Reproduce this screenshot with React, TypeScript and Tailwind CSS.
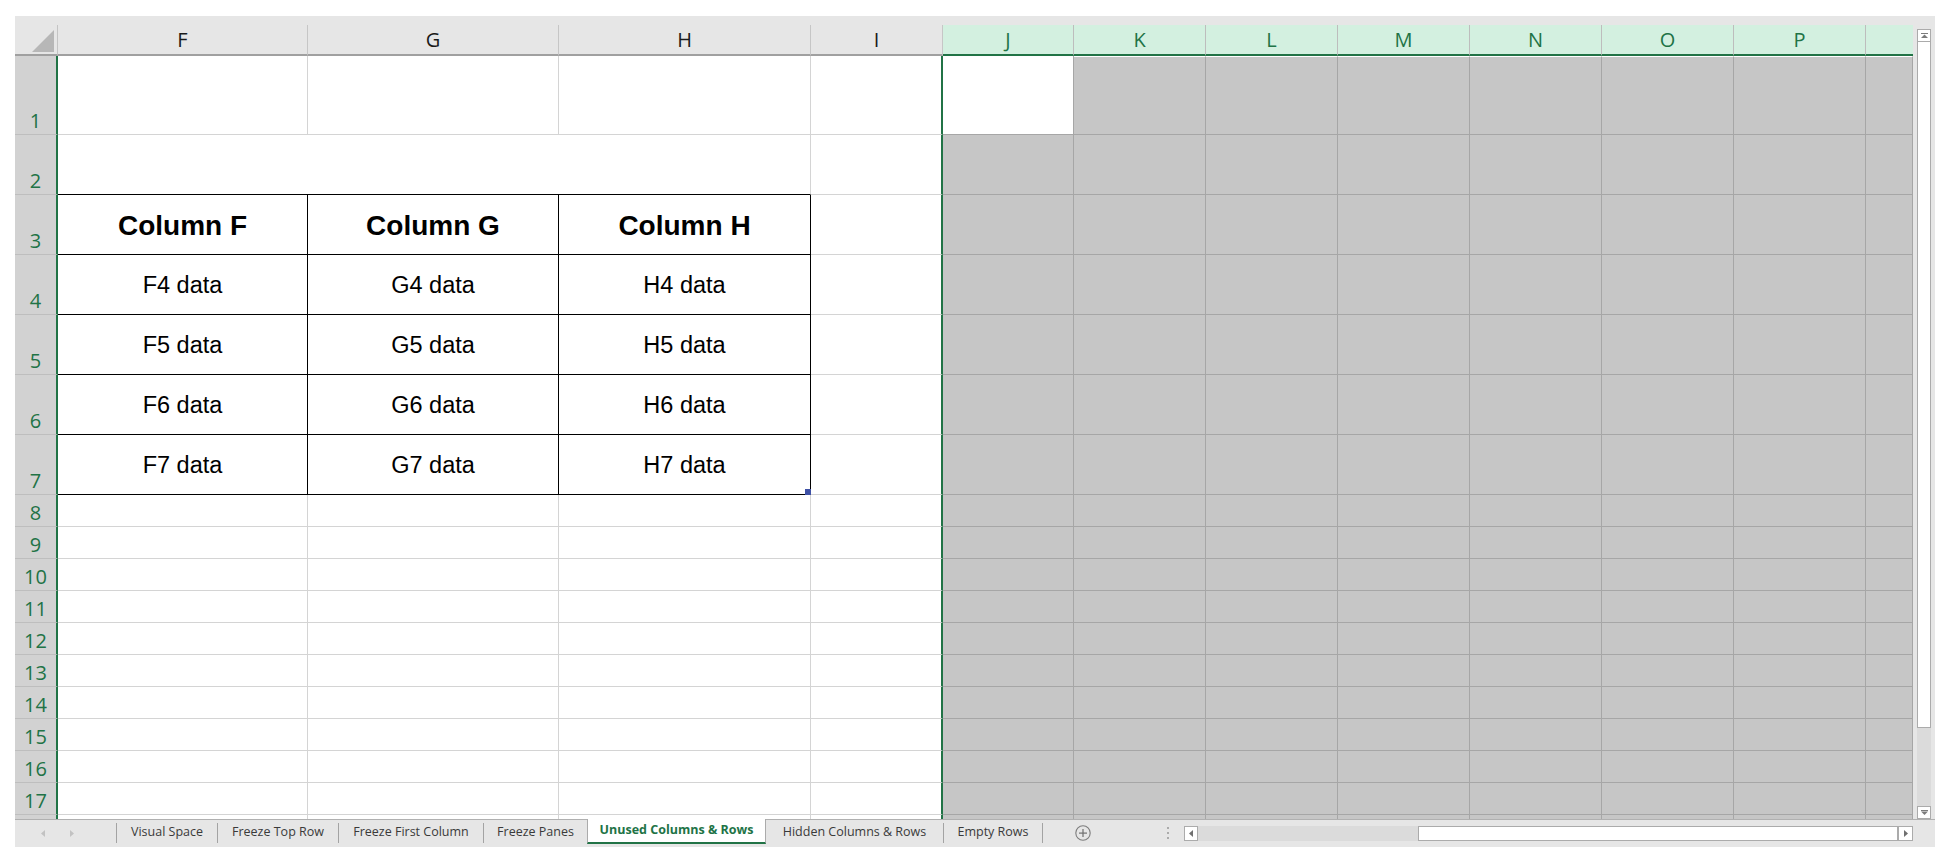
import React from "react";

const LEFT = ["F", "G", "H", "I"];
const RIGHT = ["J", "K", "L", "M", "N", "O", "P", ""];
const ROWS = Array.from({ length: 18 }, (_, i) => i + 1);

function Tri({ dir, color }: { dir: "left" | "right" | "up" | "down"; color: string }) {
  if (dir === "left")
    return (
      <svg width="4" height="7" viewBox="0 0 4 7">
        <polygon points="4,0 4,7 0,3.5" fill={color} />
      </svg>
    );
  if (dir === "right")
    return (
      <svg width="4" height="7" viewBox="0 0 4 7">
        <polygon points="0,0 0,7 4,3.5" fill={color} />
      </svg>
    );
  if (dir === "up")
    return (
      <svg width="7" height="5" viewBox="0 0 7 5">
        <rect x="0" y="0" width="7" height="1" fill={color} />
        <polygon points="0,5 7,5 3.5,1.5" fill={color} />
      </svg>
    );
  return (
    <svg width="7" height="5" viewBox="0 0 7 5">
      <rect x="0" y="0" width="7" height="1" fill={color} />
      <polygon points="0,1.5 7,1.5 3.5,5" fill={color} />
    </svg>
  );
}

function rowCells(r: number): React.ReactNode[] {
  const last = r === 18;
  const cells: React.ReactNode[] = [];
  cells.push(
    <div
      key={`rh${r}`}
      className={
        "flex items-end justify-center bg-[#d2d2d2] border-r-2 border-r-[#217346] text-[20px] leading-[20px] text-[#217346] pb-[3px] " +
        (last ? "" : "border-b border-b-[#bebebe]")
      }
    >
      {last ? "" : r}
    </div>
  );

  if (r === 2) {
    cells.push(
      <div key="m2" className="col-span-3 bg-white border-r border-r-[#d4d4d4] border-b border-b-black" />
    );
  } else {
    ["F", "G", "H"].forEach((c) => {
      const table = r >= 3 && r <= 7;
      if (table) {
        cells.push(
          <div
            key={`${c}${r}`}
            className={
              "relative flex items-center justify-center pt-[3px] bg-white border-r border-r-black border-b border-b-black font-['Liberation_Sans',Arial,sans-serif] text-black " +
              (r === 3 ? "text-[28px] font-bold" : "text-[23.5px]")
            }
          >
            {r === 3 ? `Column ${c}` : `${c}${r} data`}
            {c === "H" && r === 7 ? (
              <div className="absolute right-[-1px] bottom-[-1px] w-[6px] h-[6px] bg-[#3f51a5]" />
            ) : null}
          </div>
        );
      } else {
        cells.push(
          <div
            key={`${c}${r}`}
            className={"bg-white border-r border-r-[#d4d4d4] " + (last ? "" : "border-b border-b-[#d4d4d4]")}
          />
        );
      }
    });
  }
  cells.push(
    <div
      key={`I${r}`}
      className={"bg-white border-r-2 border-r-[#217346] " + (last ? "" : "border-b border-b-[#d4d4d4]")}
    />
  );

  RIGHT.forEach((_, i) => {
    const j1 = r === 1 && i === 0;
    cells.push(
      <div
        key={`R${i}-${r}`}
        className={
          (j1 ? "bg-white " : "bg-[#c6c6c6] ") +
          "border-r border-r-[#a6a6a6] " +
          (last ? "" : "border-b border-b-[#a6a6a6] ") +
          (r === 1 && !j1 ? "border-t border-t-white" : "")
        }
      />
    );
  });
  return cells;
}

function Sep() {
  return <div className="self-start mt-[3px] w-px h-[20px] bg-[#a3a3a3]" />;
}

function Tab({ w, children }: { w: string; children: React.ReactNode }) {
  return <div className={"flex items-center justify-center pb-[2px] whitespace-nowrap " + w}>{children}</div>;
}

export default function App() {
  return (
    <div className="w-[1956px] h-[865px] bg-white pt-[16px] pl-[15px] overflow-hidden">
      <div className="w-[1920px] h-[831px] bg-[#e6e6e6] flex flex-col">
        <div className="h-[9px]" />
        <div className="flex h-[794px]">
          <div className="w-[1898px] h-[794px] overflow-hidden grid grid-cols-[43px_250px_251px_252px_132px_131px_repeat(6,132px)_47px] grid-rows-[31px_79px_repeat(6,60px)_repeat(10,32px)_4px] font-['Open_Sans',sans-serif]">
            <div className="flex items-end justify-end pr-[3px] pb-[2px] bg-[#e6e6e6] border-r border-r-[#c4c4c4] border-b-2 border-b-[#a0a0a0]">
              <svg width="22" height="22" viewBox="0 0 22 22">
                <polygon points="22,0 22,22 0,22" fill="#b7b7b7" />
              </svg>
            </div>
            {LEFT.map((c) => (
              <div
                key={`h${c}`}
                className="flex items-center justify-center pt-[1px] bg-[#e6e6e6] border-r border-r-[#c6c6c6] border-b-2 border-b-[#a0a0a0] text-[20px] text-[#1a1a1a]"
              >
                {c}
              </div>
            ))}
            {RIGHT.map((c, i) => (
              <div
                key={`h${i}`}
                className={
                  "flex items-center justify-center pt-[1px] bg-[#d3f0e0] border-b-2 border-b-[#217346] text-[20px] text-[#217346] " +
                  (i < 7 ? "border-r border-r-[#bdbdbd]" : "")
                }
              >
                {c}
              </div>
            ))}
            {ROWS.map((r) => rowCells(r))}
          </div>
          <div className="w-[22px] flex flex-col pl-[4px] pt-[4px]">
            <div className="w-[14px] h-[13px] bg-white border border-[#ababab] flex items-center justify-center">
              <Tri dir="up" color="#7b7b7b" />
            </div>
            <div className="w-[14px] h-[686px] bg-white border-x border-b border-[#ababab]" />
            <div className="w-[14px] h-[78px] bg-[#dbdbdb]" />
            <div className="w-[14px] h-[13px] bg-white border border-[#ababab] flex items-center justify-center">
              <Tri dir="down" color="#7b7b7b" />
            </div>
          </div>
        </div>
        <div className="flex h-[28px] border-t border-t-[#b0b0b0] font-['Open_Sans',sans-serif] text-[12.5px] text-[#3a3a3a]">
          <div className="w-[101px] flex items-center pb-[1px]">
            <div className="ml-[26px] flex">
              <Tri dir="left" color="#c2c2c2" />
            </div>
            <div className="ml-[25px] flex">
              <Tri dir="right" color="#c2c2c2" />
            </div>
          </div>
          <Sep />
          <Tab w="w-[100px]">Visual Space</Tab>
          <Sep />
          <Tab w="w-[120px]">Freeze Top Row</Tab>
          <Sep />
          <Tab w="w-[144px]">Freeze First Column</Tab>
          <Sep />
          <Tab w="w-[103px]">Freeze Panes</Tab>
          <div className="self-start -mt-px h-[25px] w-[179px] bg-white border-x border-x-[#ababab] border-b-2 border-b-[#217346] flex items-center justify-center font-bold text-[#217346] whitespace-nowrap">
            Unused Columns &amp; Rows
          </div>
          <Tab w="w-[177px]">Hidden Columns &amp; Rows</Tab>
          <Sep />
          <Tab w="w-[98px]">Empty Rows</Tab>
          <Sep />
          <div className="w-[141px] flex items-center pb-[1px]">
            <svg className="ml-[32px]" width="16" height="16" viewBox="0 0 16 16">
              <circle cx="8" cy="8" r="7.2" fill="none" stroke="#7d7d7d" strokeWidth="1.1" />
              <rect x="4" y="7.5" width="8" height="1.2" fill="#6f6f6f" />
              <rect x="7.4" y="4" width="1.2" height="8" fill="#6f6f6f" />
            </svg>
            <div className="ml-[76px] flex flex-col gap-[3px]">
              <div className="w-[2px] h-[2px] bg-[#ababab]" />
              <div className="w-[2px] h-[2px] bg-[#ababab]" />
              <div className="w-[2px] h-[2px] bg-[#ababab]" />
            </div>
          </div>
          <div className="w-[729px] flex items-start pt-[6px]">
            <div className="w-[14px] h-[15px] bg-white border border-[#ababab] flex items-center justify-center">
              <Tri dir="left" color="#6f6f6f" />
            </div>
            <div className="w-[220px] h-[15px] bg-[#dbdbdb]" />
            <div className="w-[480px] h-[15px] bg-white border border-[#ababab]" />
            <div className="w-[15px] h-[15px] bg-white border border-[#ababab] flex items-center justify-center">
              <Tri dir="right" color="#6f6f6f" />
            </div>
          </div>
          <div className="w-[22px]" />
        </div>
      </div>
    </div>
  );
}
